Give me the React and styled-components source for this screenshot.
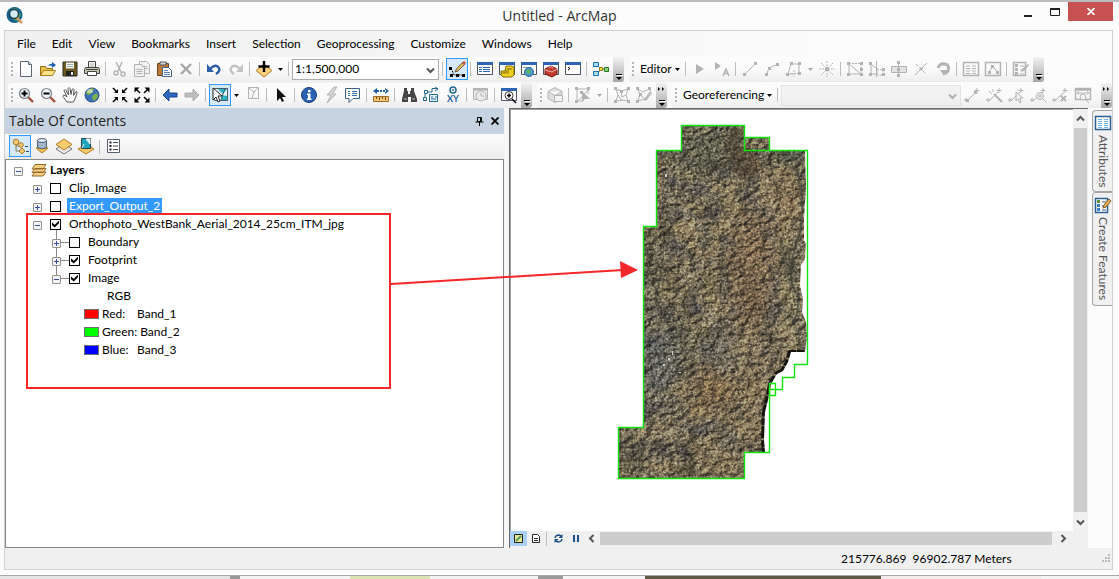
import React from "react";
import styled, { createGlobalStyle } from "styled-components";

const GlobalStyle = createGlobalStyle`
  * {
    box-sizing: border-box;
  }
  body {
    margin: 0;
    background: #fcfcfc;
    font-family: Lato, "Noto Sans", sans-serif;
    font-size: 12px;
    line-height: 18px;
    color: #000;
  }
  button, select {
    font: inherit;
    color: inherit;
    background: none;
    border: 0;
    padding: 0;
    margin: 0;
  }
  svg {
    display: block;
    flex: none;
  }
`;

const Page = styled.div`
  min-height: 100vh;
  display: flex;
  flex-direction: column;
  position: relative;
  border-top: 2px solid #bcbcbe;
`;

/* title bar */
const TitleBar = styled.header`
  height: 28px;
  display: grid;
  grid-template-columns: 1fr auto 1fr;
  align-items: center;
  padding: 0 6px;
`;
const Title = styled.h1`
  margin: 0;
  font-family: "Open Sans", sans-serif;
  font-size: 14px;
  font-weight: 400;
  color: #333;
`;
const WindowButtons = styled.div`
  display: flex;
  justify-content: flex-end;
  align-self: start;
`;
const WindowButton = styled.button`
  width: ${(props) => (props.$close ? "45px" : "27px")};
  height: 19px;
  display: flex;
  align-items: center;
  justify-content: center;
  background: ${(props) => (props.$close ? "#c75050" : "none")};
`;

const Frame = styled.main`
  flex: 1;
  margin: 0 6px 5px 4px;
  border: 1px solid #d0d0d0;
  display: flex;
  flex-direction: column;
  background: linear-gradient(90deg, #f0f0f0, #f5f5f5 40%, #fcfcfc 80%);
`;

/* menu and tool bars */
const Menu = styled.nav`
  height: 25px;
  display: flex;
  align-items: center;
  gap: 16px;
  padding: 0 12px;
`;
const MenuItem = styled.button`
  line-height: 20px;
`;
const BarRow = styled.div`
  height: 26px;
  display: flex;
  align-items: center;
  gap: 5px;
  padding: 0 0 0 3px;
`;
const Bar = styled.div`
  display: flex;
  align-items: center;
  height: 25px;
  flex: ${(props) => (props.$grow ? "1" : "none")};
  border-radius: 3px;
  background: linear-gradient(#fcfcfc, #fafafa 50%, #ededed);
`;
const Grip = styled.span`
  width: 2px;
  height: 15px;
  margin: 0 2px 0 3px;
  background: repeating-linear-gradient(#b4b4b4 0 2px, transparent 2px 4px);
`;
const Separator = styled.span`
  width: 1px;
  height: 14px;
  margin: 0 3px 0 2px;
  background: #bdbdbd;
`;
const ToolButton = styled.button`
  width: 22px;
  height: 22px;
  display: flex;
  align-items: center;
  justify-content: center;
  border: 1px solid ${(props) => (props.$active ? "#3399ff" : "transparent")};
  background: ${(props) => (props.$active ? "#d6e9f9" : "none")};
`;
const DropButton = styled.button`
  width: 11px;
  height: 22px;
  display: flex;
  align-items: center;
  justify-content: center;
`;
const TextButton = styled.button`
  display: flex;
  align-items: center;
  gap: 3px;
  padding: 0 3px 0 4px;
`;
const OverflowButton = styled.button`
  width: 11px;
  height: 25px;
  margin-left: ${(props) => (props.$far ? "7px" : "1px")};
  display: flex;
  align-items: flex-end;
  justify-content: center;
  border-radius: 0 3px 3px 0;
  background: linear-gradient(#f2f2f2, #a6a6a6);
`;
const Combo = styled.div`
  position: relative;
  display: flex;
  flex: ${(props) => (props.$grow ? "1" : "none")};
  width: ${(props) => (props.$grow ? "auto" : "147px")};
  height: 21px;
  margin-right: 1px;
  svg {
    position: absolute;
    right: 4px;
    top: 7px;
    pointer-events: none;
  }
`;
const Select = styled.select`
  appearance: none;
  flex: 1;
  padding: 0 20px 0 2px;
  border-radius: 0;
  border: 1px solid ${(props) => (props.disabled ? "#d9d9d9" : "#ababab")};
  background: ${(props) => (props.disabled ? "#efefef" : "#fff")};
`;

/* work area */
const Work = styled.div`
  flex: 1;
  display: flex;
`;
const Contents = styled.section`
  flex: 0 1 499px;
  display: flex;
  flex-direction: column;
`;
const PanelHeader = styled.div`
  height: 26px;
  display: flex;
  align-items: center;
  gap: 2px;
  padding: 0 2px 0 4px;
  background: #c7d3e0;
`;
const PanelTitle = styled.h2`
  flex: 1;
  margin: 0;
  font-family: "Open Sans", sans-serif;
  font-size: 14px;
  font-weight: 400;
  color: #222;
`;
const PanelButton = styled.button`
  width: 14px;
  height: 16px;
  display: flex;
  align-items: center;
  justify-content: center;
`;
const PanelTools = styled.div`
  height: 25px;
  display: flex;
  align-items: flex-start;
  padding: 1px 4px;
  background: linear-gradient(#fcfcfc, #ececec);
  ${Separator} {
    align-self: center;
  }
`;
const Tree = styled.ul`
  flex: 1;
  margin: 0;
  padding: 1px 0;
  list-style: none;
  background: #fff;
  border: 1px solid #828790;
`;
const Row = styled.li`
  height: 18px;
  display: flex;
  align-items: center;
  padding-left: ${(props) => props.$indent};
`;
const Toggle = styled.button`
  width: 9px;
  height: 9px;
  display: flex;
  position: relative;
  top: 1px;
  border: 1px solid #919191;
  border-radius: 1px;
  background:
    linear-gradient(#3b4fa0, #3b4fa0) center / 5px 1px no-repeat,
    ${(props) =>
      props.$open ? "" : "linear-gradient(#3b4fa0, #3b4fa0) center / 1px 5px no-repeat,"}
    #f4f4f6;
  &::before {
    content: "";
    display: ${(props) => (props.$linked ? "block" : "none")};
    position: absolute;
    left: 3px;
    bottom: 8px;
    width: 1px;
    height: 9px;
    background: #8a8a8a;
  }
`;
const Branch = styled.span`
  width: 8px;
  height: 1px;
  background: ${(props) => (props.$linked ? "#8a8a8a" : "transparent")};
`;
const Check = styled.input`
  appearance: none;
  width: 11px;
  height: 11px;
  margin: 0;
  border: 1px solid #000;
  background: #fff;
  &:checked::after {
    content: "";
    display: block;
    width: 7px;
    height: 7px;
    margin: 1px;
    background: #000;
    clip-path: polygon(0 30%, 40% 62%, 100% 0, 100% 38%, 40% 100%, 0 68%);
  }
`;
const LayerName = styled.label`
  margin-left: 6px;
  padding: 0 2px;
  line-height: 16px;
  color: ${(props) => (props.$selected ? "#fff" : "#000")};
  background: ${(props) => (props.$selected ? "#3399ff" : "none")};
`;
const Root = styled.strong`
  margin-left: 3px;
`;
const Swatch = styled.span`
  width: 15px;
  height: 10px;
  margin-right: 3px;
  border: 1px solid #6e6e6e;
  background: ${(props) => props.$color};
`;
const Channel = styled.span`
  min-width: 32px;
  margin-right: 3px;
`;

const MapPane = styled.section`
  flex: 1;
  margin-left: 5px;
  display: grid;
  grid-template-columns: 1fr 15px;
  grid-template-rows: 1fr 17px;
  background: #f0f0f0;
  border-top: 1px solid #696969;
  border-left: 1px solid #696969;
`;
const Canvas = styled.div`
  position: relative;
  background: #fff;
  border-left: 1px solid #a0a0a0;
  border-top: 1px solid #a0a0a0;
`;
const Imagery = styled.svg`
  position: absolute;
  left: 101px;
  top: 11px;
`;
const ScrollColumn = styled.div`
  display: flex;
  flex-direction: column;
`;
const ScrollRow = styled.div`
  display: flex;
  align-items: center;
  padding-bottom: 2px;
`;
const ScrollButton = styled.button`
  width: ${(props) => (props.$wide ? "20px" : "15px")};
  height: ${(props) => (props.$tall ? "18px" : "14px")};
  display: flex;
  align-items: center;
  justify-content: center;
`;
const Thumb = styled.div`
  flex: 1;
  align-self: stretch;
  margin: 1px;
  background: #cdcdcd;
`;
const ViewButton = styled.button`
  width: 17px;
  height: 15px;
  display: flex;
  align-items: center;
  justify-content: center;
  background: ${(props) => (props.$active ? "#a9d1f5" : "none")};
`;

const Tabs = styled.div`
  margin-left: 4px;
  padding-top: 2px;
  width: 20px;
  display: flex;
  flex-direction: column;
`;
const Tab = styled.button`
  display: flex;
  align-items: center;
  gap: 4px;
  writing-mode: vertical-rl;
  width: 20px;
  padding: 4px 0;
  font-size: 12px;
  color: #555;
  background: #f1f1f1;
  border: 1px solid #a5a5a5;
  border-right: 0;
  border-radius: 4px 0 0 4px;
`;

const StatusBar = styled.footer`
  height: 21px;
  display: flex;
  align-items: center;
  justify-content: flex-end;
  background: #f0f0f0;
`;
const Coordinates = styled.span`
  width: 261px;
  white-space: pre;
`;

const Desktop = styled.div`
  height: 4px;
  display: flex;
  border-top: 1px solid #a9a9a9;
`;
const Sliver = styled.span`
  flex: ${(props) => props.$size};
  background: ${(props) => props.$color};
`;

/* marks drawn over the window */
const Callout = styled.div`
  position: absolute;
  left: 26px;
  top: 211px;
  width: 365px;
  height: 176px;
  border: 2px solid #f5272b;
  pointer-events: none;
`;
const Arrow = styled.svg`
  position: absolute;
  left: 391px;
  top: 256px;
  pointer-events: none;
`;

const G = "#b3b3b3";
const window16 = (
  <g>
    <path d="M0.500 1.500h15v12h-15z" fill="#fff" stroke="#4b5563" />
    <path d="M0 1h16v3H0z" fill="#2f63b5" />
  </g>
);
const dot = (x, y, c = G) => <rect key={`${x}-${y}`} x={x} y={y} width="3" height="3" fill={c} />;
const lens = (
  <g>
    <path d="M10 10l5 5" stroke="#a3503a" strokeWidth="2.4" />
    <circle cx="6.5" cy="6.5" r="5" fill="#eef3f7" stroke="#7d8288" strokeWidth="1.2" />
  </g>
);
const control = (
  <g stroke={G} fill="none">
    <path d="M2 14l9-9M1 11v4M-1 13h4M12 1v5M9.500 3.500h5" />
  </g>
);

const glyphs = {
  new: (
    <g fill="#fff" stroke="#5c6672">
      <path d="M2.500 0.500h8l3 3v12h-11z" />
      <path d="M10.500 0.500v3h3" fill="#cfdbe8" />
    </g>
  ),
  open: (
    <g>
      <path d="M0.500 14.500v-9h5l1 2h6v7z" fill="#e9c14c" stroke="#8f6b14" />
      <path d="M0.500 14.500l3-5h12l-3 5z" fill="#fbe48b" stroke="#a67d1b" />
      <path d="M8 5q2-3 4-2v-2l4 3-4 3v-2q-2-1-4 0z" fill="#1d5fb0" />
    </g>
  ),
  save: (
    <g>
      <path d="M1 1h14v14H1z" fill="#6d5a1e" stroke="#2c2a20" />
      <path d="M4 1.500h8v6H4z" fill="#f4f4f4" />
      <path d="M5 3.500h6M5 5.500h6" stroke="#9aa" />
      <path d="M4 10h8v5H4z" fill="#222" />
      <path d="M9 11h2v3H9z" fill="#eee" />
    </g>
  ),
  print: (
    <g stroke="#444">
      <path d="M4.500 7V0.500h7V7" fill="#fff" />
      <path d="M5.500 3h5M5.500 5h5" stroke="#aaa" />
      <path d="M1.500 6.500h13l1 2v4h-15v-4z" fill="#c9c6b2" />
      <path d="M3.500 10.500h9v4h-9z" fill="#fff" />
      <path d="M2 8.500h12" />
    </g>
  ),
  cut: (
    <g stroke={G} fill="none" strokeWidth="1.5">
      <path d="M4 1l5 10M10 1L6 10" />
      <circle cx="4" cy="12" r="2" />
      <circle cx="11" cy="13" r="2" />
    </g>
  ),
  copy: (
    <g fill="#f1f1f1" stroke={G}>
      <path d="M5.500 0.500h7l3 3v9h-10z" />
      <path d="M0.500 3.500h7l3 3v9h-10z" />
      <path d="M2.500 8.500h6M2.500 10.500h6M2.500 12.500h6M8 5.500h5M11 7.500h3" />
    </g>
  ),
  paste: (
    <g>
      <path d="M1.500 2.500h11v12h-11z" fill="#bd7a36" stroke="#6b431d" />
      <path d="M4 1h6v3H4z" fill="#d8d8d8" stroke="#555" />
      <path d="M6.500 6.500h6l3 3v6h-9z" fill="#fff" stroke="#47658c" />
      <path d="M8 9.500h4M8 11.500h6M8 13.500h6" stroke="#5a86c4" />
    </g>
  ),
  delete: <path d="M3 3l10 10M13 3L3 13" stroke="#a5a5a5" strokeWidth="2.4" />,
  undo: (
    <g>
      <path d="M4 8q6-6 9-1q1.500 3-3 6" fill="none" stroke="#2a5ca8" strokeWidth="2.4" />
      <path d="M1 3v8h7z" fill="#2a5ca8" />
    </g>
  ),
  redo: (
    <g>
      <path d="M12 8q-6-6-9-1q-1.500 3 3 6" fill="none" stroke="#c2c2c2" strokeWidth="2.400" />
      <path d="M15 3v8H8z" fill="#c2c2c2" />
    </g>
  ),
  addData: (
    <g>
      <path d="M8 3l8 6.500L8 16 0 9.500z" fill="#fbd27e" stroke="#b77d2c" />
      <path d="M8 0v11M2.500 5.500h11" stroke="#000" strokeWidth="2.400" />
    </g>
  ),
  editSketch: (
    <g>
      <path d="M2 7l3 7h9" fill="none" stroke="#000" strokeDasharray="2 1" />
      {dot(0, 6, "#000")}
      {dot(1, 13, "#000")}
      {dot(7, 13, "#000")}
      {dot(13, 13, "#000")}
      <path d="M6 11l1.500-3L14 1l2 2-7 7z" fill="#e9bf68" stroke="#6b5330" />
      <path d="M13 2l2-2 2 2-2 2z" fill="#c0504d" />
    </g>
  ),
  toc: (
    <g>
      {window16}
      <path d="M2 6.500h3M2 8.500h3M2 10.500h3" stroke="#2f63b5" />
      <path d="M6 6.500h7M6 8.500h7M6 10.500h7" stroke="#2f63b5" />
    </g>
  ),
  catalog: (
    <g>
      {window16}
      <path d="M2 10h4l1-5h6l2 1v8l-2 2H4l-2-2z" fill="#f0cf1d" stroke="#7d6a0c" />
      <path d="M7 9v3H3M9 7v6M9 8h4" stroke="#7d6a0c" fill="none" />
    </g>
  ),
  search: (
    <g>
      {window16}
      <path d="M2 6.500h8" stroke="#8aa" />
      <circle cx="8" cy="11" r="4.500" fill="#4c98c9" stroke="#2b6a97" />
      <path d="M5 10q2-3 4-1t-1 4q-2 0-3-3z" fill="#63b35c" />
    </g>
  ),
  toolbox: (
    <g>
      {window16}
      <path d="M2 8l6-3 6 3v5l-5 3-7-3z" fill="#c43c30" stroke="#79170f" />
      <path d="M2 9l7 2 5-3M6 7q2-3 4 0" fill="none" stroke="#f3b4ad" />
    </g>
  ),
  python: (
    <g>
      {window16}
      <path d="M3 6l2 1.500L3 9" fill="none" stroke="#000" />
    </g>
  ),
  model: (
    <g fill="none">
      <path d="M4 4l4 4-4 5M8 8h4" stroke="#333" />
      <path d="M0.500 1.500h5v4h-5zM0.500 10.500h5v4h-5z" fill="#a8dcf5" stroke="#1672ae" />
      <path d="M6.500 6.500h3v3h-3z" fill="#f8dc45" stroke="#927a10" />
      <path d="M11.500 6.500h4v4h-4z" fill="#87d378" stroke="#2c7a25" />
    </g>
  ),
  editTool: <path d="M4 3v10l8-5z" fill={G} />,
  editText: (
    <g>
      <path d="M1 1v8l6-4z" fill={G} />
      <path d="M9 15l3-7 3 7M10 12.500h4" fill="none" stroke={G} strokeWidth="1.500" />
    </g>
  ),
  line: (
    <g>
      <path d="M3 13L13 3" stroke={G} />
      {dot(1, 12)}
      {dot(12, 1)}
    </g>
  ),
  arc: (
    <g>
      <path d="M3 13Q4 5 13 4" fill="none" stroke={G} />
      {[dot(1, 12), dot(4, 6), dot(12, 2)]}
    </g>
  ),
  trace: (
    <g>
      <path d="M5 3h8v9M5 3L2 13h5" fill="none" stroke={G} />
      <path d="M8 9v7M5 12.500h7" stroke={G} strokeDasharray="2 1" />
      {[dot(4, 1), dot(12, 1), dot(0, 12), dot(12, 11)]}
    </g>
  ),
  burst: (
    <g stroke={G} strokeDasharray="2 1">
      <path d="M8 0v16M0 8h16M2 2l12 12M14 2L2 14" />
      <path d="M6 8h4" strokeWidth="4" strokeDasharray="none" />
    </g>
  ),
  reshape: (
    <g>
      <path d="M2 14V3l12 10H2" fill="none" stroke={G} />
      <path d="M2 2.500h12v11" fill="none" stroke={G} strokeDasharray="2 1" />
      {[dot(0, 1), dot(13, 1), dot(0, 12), dot(13, 12), dot(13, 7)]}
    </g>
  ),
  cutPoly: (
    <g>
      <path d="M2 14V3l6 5v5H2M7.500 0v16" fill="none" stroke={G} />
      <path d="M8 8l6 1v5H8" fill="none" stroke={G} strokeDasharray="2 1" />
      {[dot(0, 1), dot(0, 12), dot(13, 7), dot(13, 12)]}
    </g>
  ),
  split: (
    <g>
      <path d="M0.500 5.500h15v6h-15z" fill="#e2e2e2" stroke={G} />
      <path d="M7.500 0v16" stroke={G} />
      {[dot(6, 0), dot(6, 7), dot(6, 13)]}
    </g>
  ),
  splitLine: (
    <g stroke={G}>
      <path d="M2 14L14 2" />
      <path d="M3 3l10 10" strokeDasharray="3 2" />
      <path d="M6.500 8h3" strokeWidth="3" />
    </g>
  ),
  rotate: (
    <g>
      <path d="M3 7q2-5 7-4t3 7l-3 3" fill="none" stroke={G} strokeWidth="3" />
      <path d="M5 9h7l-3 6z" fill={G} />
    </g>
  ),
  attributes: (
    <g stroke={G} fill="none">
      <path d="M0.500 1.500h15v13h-15z" strokeWidth="1.500" />
      <path d="M3 5h4M3 7.500h4M3 10h4M3 12.500h4M9 5h4M9 7.500h4M9 10h4M9 12.500h4" />
    </g>
  ),
  sketchProps: (
    <g>
      <path d="M0.500 1.500h15v13h-15z" fill="none" stroke={G} strokeWidth="1.500" />
      <path d="M4 11l4-6 4 6" fill="none" stroke={G} />
      {[dot(3, 10), dot(6, 4), dot(11, 10)]}
    </g>
  ),
  createFeat: (
    <g>
      <path d="M0.500 1.500h12v13h-12z" fill="none" stroke={G} strokeWidth="1.500" />
      {[dot(2, 3), dot(2, 7), dot(2, 11)]}
      <path d="M7 5h4M7 9h3M7 13h4" stroke={G} />
      <path d="M8 11l1-3 6-5 1 1-5 6z" fill={G} />
    </g>
  ),
  zoomIn: (
    <g>
      {lens}
      <path d="M6.500 3.500v6M3.500 6.500h6" stroke="#000" strokeWidth="2" />
    </g>
  ),
  zoomOut: (
    <g>
      {lens}
      <path d="M3.500 6.500h6" stroke="#000" strokeWidth="2" />
    </g>
  ),
  pan: (
    <path
      d="M5 15L1 9.500q0-2 2-1L5 10 2 3.500q1-2 2 0L6.500 8 6 1.500q1-2 2 0L9 7.500l1-5q1.500-1.500 2 0L11.500 8.500 13.500 5q2-1 1.500 1l-2.500 7-1 2z"
      fill="#fff"
      stroke="#555"
    />
  ),
  globe: (
    <g>
      <circle cx="8" cy="8" r="7" fill="#3c72b8" stroke="#234c86" />
      <path d="M3 4q4-4 7-2l-2 4-3 2-3-1zM9 8l4-2 1 4-4 4-2-3z" fill="#7fb04e" />
      <ellipse cx="6" cy="4" rx="3" ry="2" fill="#fff" opacity="0.500" />
    </g>
  ),
  fixedIn: (
    <g fill="#000" stroke="#000" strokeWidth="1.500">
      <path d="M1 1l4 4M15 1l-4 4M1 15l4-4M15 15l-4-4" />
      <path d="M6 2v4H2zM10 2v4h4zM6 14v-4H2zM10 14v-4h4z" stroke="none" />
    </g>
  ),
  fixedOut: (
    <g fill="#000" stroke="#000" strokeWidth="1.500">
      <path d="M2 2l4 4M14 2l-4 4M2 14l4-4M14 14l-4-4" />
      <path d="M0.500 0.500h5l-5 5zM15.500 0.500h-5l5 5zM0.500 15.500h5l-5-5zM15.500 15.500h-5l5-5z" stroke="none" />
    </g>
  ),
  back: <path d="M1 8l6-6v4h8v4H7v4z" fill="#2f68c4" stroke="#1b458f" />,
  forward: <path d="M15 8L9 2v4H1v4h8v4z" fill="#bdbdbd" stroke="#adadad" />,
  selectFeat: (
    <g>
      <path d="M2.500 1.500h13v12h-13z" fill="#e9f3f7" stroke="#4b5b66" />
      <path d="M6 2l5 5 4-5zM10 8l5 1v4H9z" fill="#2bb4c7" />
      <path d="M11 7l2-5M11 7l-2 6" stroke="#4b5b66" />
      <path d="M1 1v12l3-3 2 5 2-1-2-5h4z" fill="#fff" stroke="#222" />
    </g>
  ),
  clearSel: (
    <g fill="none" stroke={G}>
      <path d="M3.500 0.500h10v11h-10zM4 1l5 4 4-4M9 5l-2 6" />
    </g>
  ),
  arrow: <path d="M4 1v13l3-3 2 4 2-1-2-4h4z" fill="#111" />,
  identify: (
    <g>
      <circle cx="8" cy="8" r="7.500" fill="#2a62b4" stroke="#183f7d" />
      <path d="M7 3h2.500v2.200H7zM6 6.500h3.500v5h1V13H6v-1.500h1V8H6z" fill="#fff" />
    </g>
  ),
  hyperlink: <path d="M11 0L4 8h4l-4 8 9-9H9l5-7z" fill="#d6d6d6" stroke={G} />,
  htmlPopup: (
    <g>
      <path d="M0.500 1.500h14v10H8l-4 4v-4H0.500z" fill="#fff" stroke="#3c6184" />
      <path d="M3 4.500h2M3 6.500h2M3 8.500h2M7 4.500h5M7 6.500h5M7 8.500h5" stroke="#356fa8" />
    </g>
  ),
  measure: (
    <g>
      <path d="M0.500 9.500h15v5h-15z" fill="#f7c777" stroke="#9a6a1f" />
      <path d="M3.500 10v2M6.500 10v3M9.500 10v2M12.500 10v3" stroke="#6d4a14" />
      <path d="M0 4l4-3v6zM16 4l-4-3v6zM3 3h3v2H3zM10 3h3v2h-3zM7 3h2v2H7z" fill="#215fa3" />
    </g>
  ),
  find: (
    <g fill="#454545">
      <path d="M3 1h3v3h1v3h2V4h1V1h3v3l3 8v3h-6v-5H7v5H1v-3L3 4z" />
      <path d="M3 12h3M11 12h3" stroke="#bbb" />
    </g>
  ),
  route: (
    <g fill="none" stroke="#22668e">
      <path d="M1.500 3.500h3v3h-3zM0.500 10.500h3v3h-3zM5 5h4V1.500M9 1.500h5M12 0l3 2-3 2M2 7v3" />
      <path d="M6.500 7.500h8v7h-8z" fill="#e7f2f7" />
      <path d="M8 10h2M8 12h5M12 10h2" />
    </g>
  ),
  clock: (
    <g stroke={G} fill="#eaeaea">
      <path d="M0.500 1.500h14v11h-14z" />
      <path d="M0 2.500h15" strokeWidth="2" />
      <circle cx="8" cy="9" r="5" />
      <path d="M8 6v3h3" fill="none" />
    </g>
  ),
  viewer: (
    <g>
      {window16}
      <circle cx="8" cy="8.500" r="4" fill="#fff" stroke="#333" />
      <path d="M8 6.500v4M6 8.500h4M11 12l4 4" stroke="#000" strokeWidth="1.500" />
    </g>
  ),
  cube: (
    <g fill="#e0e0e0" stroke={G}>
      <path d="M8 0.500l7 4v7l-7 4-7-4v-7zM1 4.500l7 4 7-4M8 8.500v7" />
      <path d="M7.500 8.500h8v6h-8z" fill="#f3f3f3" />
    </g>
  ),
  topoEdit: (
    <g>
      <path d="M2 2h11v5M2 2v12h5M4 13L13 3" fill="none" stroke={G} />
      {[dot(0, 0), dot(12, 0), dot(0, 13), dot(5, 4)]}
      <path d="M7 4v11l3-3 5 0z" fill={G} />
    </g>
  ),
  topoShare: (
    <g>
      <path d="M2 2l5 2 7-2-2 6 2 6-6-1-6 1 2-6zM4 8l4 6M7 4l1 6 4-2" fill="none" stroke={G} />
      {[dot(0, 0), dot(13, 0), dot(0, 13), dot(13, 13), dot(6, 3)]}
    </g>
  ),
  topoReshape: (
    <g>
      <path d="M2 2l5 3 6-3M2 2l2 6-2 6 7-2 6-9M4 8l5 4" fill="none" stroke={G} />
      {[dot(0, 0), dot(12, 0), dot(0, 13), dot(3, 6)]}
      <path d="M8 13l7-8 1 1-6 8z" fill={G} />
    </g>
  ),
  ctrlAdd: (
    <g>
      {control}
      {[dot(1, 12), dot(9, 4)]}
    </g>
  ),
  ctrlAuto: (
    <g>
      {control}
      <path d="M7 7l8 8" stroke={G} strokeWidth="2" />
      <path d="M2 4l3 3M6 2v3" stroke={G} />
    </g>
  ),
  ctrlSelect: (
    <g>
      {control}
      <path d="M7 5v9l2-2 2 4 1-1-1-4h3z" fill="#eee" stroke={G} />
    </g>
  ),
  ctrlZoom: (
    <g>
      {control}
      <circle cx="9" cy="9" r="3.500" fill="#f2f2f2" stroke={G} />
      <path d="M11.500 11.500l4 4M7 9h4M9 7v4" stroke={G} />
    </g>
  ),
  ctrlDelete: (
    <g>
      {control}
      <path d="M8 9l5 5M13 9l-5 5" stroke={G} strokeWidth="2" />
    </g>
  ),
  linkTable: (
    <g stroke={G} fill="none">
      <path d="M0.500 1.500h15v11h-15zM0 3h16" strokeWidth="1.500" />
      <path d="M2 6h12M4 4.500L2 6l2 1.500M12 4.500L14 6l-2 1.500" />
      <circle cx="8" cy="10" r="3" fill="#f2f2f2" />
      <path d="M10 12l4 4" />
    </g>
  ),
  listDrawing: (
    <g>
      <path d="M4 5v8h6M4 8h5" fill="none" stroke="#8a7a55" />
      <circle cx="4" cy="4" r="2.800" fill="#f6c979" stroke="#b07a25" />
      <circle cx="9" cy="7" r="2.300" fill="#f6c979" stroke="#b07a25" />
      <path d="M10 10l3 3-3 3-3-3z" fill="#f6c979" stroke="#b07a25" />
      <path d="M13 8.500h3M14 13.500h3" stroke="#2a4c74" />
    </g>
  ),
  listSource: (
    <g>
      <path d="M8 15L2 10h12z" fill="#f6c14f" stroke="#a97b1f" />
      <path d="M3.500 2.500v7q4.500 3 9 0v-7z" fill="#a4b4c9" stroke="#4d5e78" />
      <ellipse cx="8" cy="2.500" rx="4.500" ry="2" fill="#dfe7f1" stroke="#4d5e78" />
    </g>
  ),
  listVisible: (
    <g>
      <path d="M8 6l8 5-8 5-8-5z" fill="#ececec" stroke="#777" />
      <path d="M8 1l8 5.500L8 12 0 6.500z" fill="#f8ca6c" stroke="#ad7c25" />
    </g>
  ),
  listSelection: (
    <g>
      <path d="M8 6l8 5-8 5-8-5z" fill="#f8ca6c" stroke="#ad7c25" />
      <path d="M3.500 0.500h9v10h-9z" fill="#1fa5bd" stroke="#28414c" />
      <path d="M8 1l4 0v5zM4 10l2-4" fill="#e7f4f7" stroke="#e7f4f7" />
    </g>
  ),
  options: (
    <g>
      <path d="M1.500 1.500h12v13h-12z" fill="#fff" stroke="#56616c" />
      <path d="M3.500 4.500h2M3.500 8h2M3.500 11.500h2" stroke="#222" strokeWidth="2" />
      <path d="M7 4.500h5M7 8h5M7 11.500h5" stroke="#444" />
    </g>
  ),
  layers: (
    <g fill="#f8cf83" stroke="#94692a">
      <path d="M1 14l3-4h11l-3 4zM1 10.500l3-4h11l-3 4zM1 7l3-4.500h11L12 7z" />
    </g>
  ),
  table: (
    <g>
      <path d="M0.500 1.500h15v13h-15z" fill="#fff" stroke="#2e6094" strokeWidth="1.500" />
      <path d="M3 4.500h4M3 6.500h4M3 8.500h4M3 10.500h4M3 12.500h4M9 4.500h4M9 6.500h4M9 8.500h4M9 10.500h4M9 12.500h4" stroke="#76b4e6" />
    </g>
  ),
  template: (
    <g>
      <path d="M0.500 1.500h12v14h-12z" fill="#fff" stroke="#2e6094" strokeWidth="1.500" />
      {dot(2, 3, "#5b8f3a")}
      {dot(2, 7, "#377fc5")}
      {dot(2, 11, "#377fc5")}
      <path d="M7 5h4M7 9h2M7 13h4" stroke="#3d5a78" />
      <path d="M8 11l1-3 5-6 2 2-5 6z" fill="#f0b458" stroke="#7b5727" />
    </g>
  ),
};

function Icon({ name, size = 16 }) {
  return (
    <svg width={size} height={size} viewBox="0 0 16 16" overflow="visible" aria-hidden="true">
      {glyphs[name]}
    </svg>
  );
}

// the go-to-XY icon carries real letters
function GoToXY() {
  return (
    <svg width="20" height="20" viewBox="0 0 20 20" aria-hidden="true">
      <circle cx="10" cy="5" r="3" fill="none" stroke="#22668e" strokeWidth="1.500" />
      <circle cx="10" cy="5" r="1" fill="#22668e" />
      <text x="10" y="17" textAnchor="middle" fontSize="9" fontWeight="700" fill="#1d5f9a">
        XY
      </text>
    </svg>
  );
}

function Chevron({ dir = "down", color = "#555" }) {
  const turn = { down: 0, left: 90, up: 180, right: 270 }[dir];
  return (
    <svg width="9" height="9" viewBox="0 0 9 9" aria-hidden="true">
      <path
        d="M1 2.500l3.500 3.500L8 2.500"
        fill="none"
        stroke={color}
        strokeWidth="2"
        transform={`rotate(${turn} 4.500 4.500)`}
      />
    </svg>
  );
}

function Caret({ color = "#000" }) {
  return (
    <svg width="5" height="3" viewBox="0 0 5 3" aria-hidden="true">
      <path d="M0 0h5L2.500 3z" fill={color} />
    </svg>
  );
}

function Overflow({ more, far }) {
  return (
    <OverflowButton $far={far} aria-label="More buttons">
      <svg width="11" height="25" viewBox="0 0 11 25" aria-hidden="true">
        {more && <path d="M2 4v4l2-2zM6 4v4l2-2z" fill="#000" />}
        <path d="M4 18h6v1H4z" fill="#fff" />
        <path d="M3 17h6v1H3zM3 20h6l-3 3z" fill="#000" />
      </svg>
    </OverflowButton>
  );
}

// "|" is a separator, "v" a black drop arrow, "-" a grey one, "!" marks the pressed button
function Tools({ items }) {
  return items.map((item, i) => {
    if (item === "|") return <Separator key={i} />;
    if (item === "v" || item === "-") {
      return (
        <DropButton key={i} aria-label="Open list">
          <Caret color={item === "v" ? "#000" : "#aaa"} />
        </DropButton>
      );
    }
    const active = item.startsWith("!");
    const name = active ? item.slice(1) : item;
    return (
      <ToolButton key={i} $active={active} aria-label={name}>
        {name === "goToXY" ? <GoToXY /> : <Icon name={name} />}
      </ToolButton>
    );
  });
}

const menus = [
  "File",
  "Edit",
  "View",
  "Bookmarks",
  "Insert",
  "Selection",
  "Geoprocessing",
  "Customize",
  "Windows",
  "Help",
];

const layers = [
  { name: "Clip_Image", indent: "27px" },
  { name: "Export_Output_2", indent: "27px", selected: true },
  { name: "Orthophoto_WestBank_Aerial_2014_25cm_ITM_jpg", indent: "27px", checked: true, open: true },
  { name: "Boundary", indent: "46px", child: true },
  { name: "Footprint", indent: "46px", child: true, checked: true },
  { name: "Image", indent: "46px", child: true, checked: true, open: true },
];

const bands = [
  ["Red:", "Band_1", "#ff0000"],
  ["Green:", "Band_2", "#00ff00"],
  ["Blue:", "Band_3", "#0000ff"],
];

const slivers = [
  [230, "#e4e4e4"],
  [10, "#999"],
  [110, "#f4f4f4"],
  [80, "#dbe3b5"],
  [108, "#f2f2f2"],
  [25, "#9a9a9a"],
  [82, "#f4f4f4"],
  [236, "#5e5a45"],
  [160, "#f3ecec"],
  [78, "#f4f4f4"],
];

function MapImagery() {
  return (
    <Imagery width="200" height="362" viewBox="612 121 200 362" role="img" aria-label="Aerial orthophoto">
      <defs>
        <clipPath id="area">
          <path d="M681 125h63v12h25v13h36l1 38-2 30v22l2 4-1 15-4 6-1 20 3 15-1 12 4 10 1 14-2 16h-14l-3 10-5 9-6 3-6 10-3 16-3 12-1 28 1 12h-21v26H618v-51h25V226h13v-76h25z" />
        </clipPath>
        <filter id="relief" x="0" y="0" width="100%" height="100%" colorInterpolationFilters="sRGB">
          <feTurbulence type="fractalNoise" baseFrequency="0.14 0.2" numOctaves="4" seed="8" />
          <feColorMatrix values="0 0 0 0 0  0 0 0 0 0  0 0 0 0 0  1 0.6 0 0 -0.200" />
          <feDiffuseLighting surfaceScale="4" diffuseConstant="0.780" lightingColor="#fff">
            <feDistantLight azimuth="215" elevation="48" />
          </feDiffuseLighting>
        </filter>
        <filter id="grain" x="0" y="0" width="100%" height="100%" colorInterpolationFilters="sRGB">
          <feTurbulence type="fractalNoise" baseFrequency="0.45" numOctaves="3" seed="4" />
          <feColorMatrix values="1.2 0 0 0 -0.100  1.2 0 0 0 -0.100  1.2 0 0 0 -0.100  0 0 0 0 1" />
        </filter>
        <filter id="mottle" x="0" y="0" width="100%" height="100%" colorInterpolationFilters="sRGB">
          <feTurbulence type="fractalNoise" baseFrequency="0.05" numOctaves="5" seed="21" />
          <feColorMatrix values="0.9 0 0 0 -0.010  0.75 0.05 0 0 0.010  0.4 0.200 0 0 0.040  0 0 0 0 1" />
        </filter>
        <filter id="soft" x="-50%" y="-50%" width="200%" height="200%">
          <feGaussianBlur stdDeviation="9" />
        </filter>
        <filter id="softer" x="-50%" y="-50%" width="200%" height="200%">
          <feGaussianBlur stdDeviation="2" />
        </filter>
      </defs>
      <g clipPath="url(#area)">
        <rect x="612" y="121" width="200" height="362" fill="#766b56" />
        <rect x="612" y="121" width="200" height="362" filter="url(#mottle)" opacity="0.500" />
        <g filter="url(#soft)" opacity="0.600">
          <ellipse cx="705" cy="150" rx="45" ry="26" fill="#585c4e" />
          <ellipse cx="790" cy="160" rx="16" ry="16" fill="#34463e" />
          <ellipse cx="650" cy="250" rx="10" ry="70" fill="#585645" />
          <ellipse cx="785" cy="200" rx="14" ry="34" fill="#927a58" />
          <ellipse cx="752" cy="270" rx="22" ry="60" fill="#7c6448" />
          <ellipse cx="670" cy="345" rx="26" ry="24" fill="#484e42" />
          <ellipse cx="655" cy="365" rx="18" ry="40" fill="#5a5e62" />
          <ellipse cx="720" cy="370" rx="16" ry="36" fill="#6c6c64" />
          <ellipse cx="712" cy="390" rx="20" ry="22" fill="#7b623f" />
          <ellipse cx="750" cy="390" rx="18" ry="60" fill="#857459" />
          <ellipse cx="635" cy="460" rx="16" ry="16" fill="#505040" />
          <ellipse cx="720" cy="465" rx="30" ry="14" fill="#857556" />
          <ellipse cx="798" cy="300" rx="14" ry="50" fill="#807962" />
        </g>
        <rect
          x="612"
          y="121"
          width="200"
          height="362"
          filter="url(#relief)"
          style={{ mixBlendMode: "overlay" }}
          opacity="0.500"
        />
        <g filter="url(#softer)" opacity="0.550">
          <path d="M730 170l12 14 18 18 14 14 22 18" fill="none" stroke="#a99878" strokeWidth="2" />
          <path d="M725 140l10-14 8 8-6 10 20 6 2 20-14 12-12-10z" fill="#46392a" />
          <path d="M705 165l22-4 4 5-14 4zM670 466l26-2-6 12-16-2z" fill="#3f3a2c" />
          <path d="M780 238l10 14 6 26-8 6-6-22z" fill="#4c4b3e" />
        </g>
        <rect
          x="612"
          y="121"
          width="200"
          height="362"
          filter="url(#grain)"
          style={{ mixBlendMode: "overlay" }}
          opacity="0.600"
        />
        <path
          d="M801 185q3 30-1 48-7 16-8 32-4 20 6 30 2 18-6 28M797 165l4 30"
          fill="none"
          stroke="#3a3c33"
          strokeWidth="2"
          opacity="0.600"
        />
        <path
          d="M665 174h2v3h-2zM672 351h1v4h-1zM668 358h2v2h-2zM679 372h2v1h-2zM663 364h2v2h-2z"
          fill="#d0d2d4"
        />
        <path
          d="M804 352h-14l-3 10-5 9-6 3-6 10-3 16-3 12-1 28 1 12"
          fill="none"
          stroke="#15130f"
          strokeWidth="4"
          strokeDasharray="7 1 12 2"
        />
      </g>
      <g fill="none" stroke="#12e412" strokeWidth="1.400">
        <path d="M681.500 125.500h63v12h25v13h38v214h-13v13h-12v12h-13v63h-25v26h-126v-51h25v-201h13v-76h25z" />
        <path d="M744.500 137.500v13h25M769.500 383.500h6v12h-6z" />
      </g>
    </Imagery>
  );
}

function ContentsPanel() {
  return (
    <Contents>
      <PanelHeader>
        <PanelTitle>Table Of Contents</PanelTitle>
        <PanelButton aria-label="Pin">
          <svg width="9" height="9" viewBox="0 0 9 9">
            <path d="M2.500 0.500h4v4h-4zM0.500 5h8M4.500 5v4M5.500 1v3" fill="none" stroke="#000" />
          </svg>
        </PanelButton>
        <PanelButton aria-label="Close panel">
          <svg width="8" height="8" viewBox="0 0 8 8">
            <path d="M0.500 0.500l7 7M7.500 0.500l-7 7" stroke="#000" strokeWidth="1.800" />
          </svg>
        </PanelButton>
      </PanelHeader>
      <PanelTools>
        <Tools items={["!listDrawing", "listSource", "listVisible", "listSelection", "|", "options"]} />
      </PanelTools>
      <Tree>
        <Row $indent="8px">
          <Toggle $open aria-label="Collapse Layers" />
          <Branch />
          <Icon name="layers" />
          <Root>Layers</Root>
        </Row>
        {layers.map((layer) => (
          <Row key={layer.name} $indent={layer.indent}>
            <Toggle
              $open={layer.open}
              $linked={layer.child}
              aria-label={`${layer.open ? "Collapse" : "Expand"} ${layer.name}`}
            />
            <Branch $linked={layer.child} />
            <Check type="checkbox" id={layer.name} defaultChecked={layer.checked} />
            <LayerName htmlFor={layer.name} $selected={layer.selected}>
              {layer.name}
            </LayerName>
          </Row>
        ))}
        <Row $indent="101px">RGB</Row>
        {bands.map(([channel, band, color]) => (
          <Row key={band} $indent="78px">
            <Swatch $color={color} />
            <Channel>{channel}</Channel>
            {band}
          </Row>
        ))}
      </Tree>
    </Contents>
  );
}

function MapView() {
  return (
    <MapPane>
      <Canvas>
        <MapImagery />
      </Canvas>
      <ScrollColumn>
        <ScrollButton $tall aria-label="Scroll up">
          <Chevron dir="up" />
        </ScrollButton>
        <Thumb />
        <ScrollButton $tall aria-label="Scroll down">
          <Chevron />
        </ScrollButton>
      </ScrollColumn>
      <ScrollRow>
        <ViewButton $active aria-label="Data view">
          <svg width="9" height="9" viewBox="0 0 9 9">
            <path d="M0.500 0.500h8v8h-8z" fill="#e6e79a" stroke="#222" />
            <path d="M2 7l5-5" stroke="#5c9a57" strokeWidth="2" />
          </svg>
        </ViewButton>
        <ViewButton aria-label="Layout view">
          <svg width="8" height="9" viewBox="0 0 8 9">
            <path d="M0.500 0.500h5l2 2v6h-7zM2 4.500h4M2 6.500h4" fill="#fff" stroke="#222" />
          </svg>
        </ViewButton>
        <Separator />
        <ViewButton aria-label="Refresh">
          <svg width="9" height="9" viewBox="0 0 9 9">
            <path d="M1 4q0.500-3 4-3l2 1M8 5q-0.500 3-4 3l-2-1" fill="none" stroke="#1d4f86" strokeWidth="1.400" />
            <path d="M8.500 0v4h-4zM0.500 9V5h4z" fill="#1d4f86" />
          </svg>
        </ViewButton>
        <ViewButton aria-label="Pause drawing">
          <svg width="7" height="7" viewBox="0 0 7 7">
            <path d="M1 0h2v7H1zM5 0h2v7H5z" fill="#1d4f86" />
          </svg>
        </ViewButton>
        <ScrollButton aria-label="Scroll left">
          <Chevron dir="left" />
        </ScrollButton>
        <Thumb />
        <ScrollButton $wide aria-label="Scroll right">
          <Chevron dir="right" />
        </ScrollButton>
      </ScrollRow>
    </MapPane>
  );
}

function App() {
  return (
    <>
      <GlobalStyle />
      <Page>
        <TitleBar>
          <svg width="18" height="18" viewBox="0 0 18 18" aria-hidden="true">
            <circle cx="8.500" cy="8" r="8" fill="#17618b" />
            <path d="M3 4q4-4 8-2l4 6-4 6-5-2z" fill="#4fa568" />
            <circle cx="8" cy="7" r="4.500" fill="#d5ebf5" stroke="#1c3e57" strokeWidth="1.500" />
            <path d="M11 11l5 5" stroke="#d29b5e" strokeWidth="2.500" />
          </svg>
          <Title>Untitled - ArcMap</Title>
          <WindowButtons>
            <WindowButton aria-label="Minimize">
              <svg width="8" height="11" viewBox="0 0 8 11">
                <path d="M0 9h8v2H0z" fill="#222" />
              </svg>
            </WindowButton>
            <WindowButton aria-label="Maximize">
              <svg width="10" height="8" viewBox="0 0 10 8">
                <path d="M0.500 1h9v6.500h-9z" fill="none" stroke="#222" />
                <path d="M0 0h10v2H0z" fill="#222" />
              </svg>
            </WindowButton>
            <WindowButton $close aria-label="Close">
              <svg width="8" height="7" viewBox="0 0 8 7">
                <path d="M0.500 0l7 7M7.500 0l-7 7" stroke="#fff" strokeWidth="1.700" />
              </svg>
            </WindowButton>
          </WindowButtons>
        </TitleBar>
        <Frame>
          <Menu>
            {menus.map((item) => (
              <MenuItem key={item}>{item}</MenuItem>
            ))}
          </Menu>
          <BarRow>
            <Bar role="toolbar" aria-label="Standard">
              <Grip />
              <Tools
                items={["new", "open", "save", "print", "|", "cut", "copy", "paste", "delete", "|", "undo", "redo", "|", "addData", "v", "|"]}
              />
              <Combo>
                <Select aria-label="Map scale">
                  <option>1:1,500,000</option>
                </Select>
                <Chevron />
              </Combo>
              <Tools items={["|", "!editSketch", "|", "toc", "catalog", "search", "toolbox", "python", "|", "model"]} />
              <Overflow />
            </Bar>
            <Bar role="toolbar" aria-label="Editor">
              <Grip />
              <TextButton>
                Editor <Caret />
              </TextButton>
              <Tools
                items={["|", "editTool", "editText", "|", "line", "arc", "trace", "-", "burst", "|", "reshape", "cutPoly", "split", "splitLine", "rotate", "|", "attributes", "sketchProps", "|", "createFeat"]}
              />
              <Overflow />
            </Bar>
          </BarRow>
          <BarRow>
            <Bar role="toolbar" aria-label="Tools">
              <Grip />
              <Tools
                items={["zoomIn", "zoomOut", "pan", "globe", "|", "fixedIn", "fixedOut", "|", "back", "forward", "|", "!selectFeat", "v", "clearSel", "|", "arrow", "|", "identify", "hyperlink", "htmlPopup", "|", "measure", "|", "find", "route", "goToXY", "|", "clock", "|", "viewer"]}
              />
              <Overflow />
            </Bar>
            <Bar role="toolbar" aria-label="Topology">
              <Grip />
              <Tools items={["cube", "|", "topoEdit", "-", "|", "topoShare", "topoReshape"]} />
              <Overflow more />
            </Bar>
            <Bar $grow role="toolbar" aria-label="Georeferencing">
              <Grip />
              <TextButton>
                Georeferencing <Caret />
              </TextButton>
              <Separator />
              <Combo $grow>
                <Select disabled aria-label="Georeferencing layer" />
                <Chevron color="#b0b0b0" />
              </Combo>
              <Tools items={["ctrlAdd", "ctrlAuto", "ctrlSelect", "ctrlZoom", "ctrlDelete", "linkTable"]} />
              <Overflow more far />
            </Bar>
          </BarRow>
          <Work>
            <ContentsPanel />
            <MapView />
            <Tabs>
              <Tab>
                <Icon name="table" />
                Attributes
              </Tab>
              <Tab>
                <Icon name="template" />
                Create Features
              </Tab>
            </Tabs>
          </Work>
          <StatusBar>
            <Coordinates>215776.869  96902.787 Meters</Coordinates>
            <svg width="10" height="10" viewBox="0 0 10 10" aria-hidden="true">
              <path d="M6 0h2v2H6zM3 3h2v2H3zM6 3h2v2H6zM0 6h2v2H0zM3 6h2v2H3zM6 6h2v2H6z" fill="#bbb" />
            </svg>
          </StatusBar>
        </Frame>
        <Desktop>
          {slivers.map(([size, color]) => (
            <Sliver key={size} $size={size} $color={color} />
          ))}
        </Desktop>
        <Callout />
        <Arrow width="250" height="34" viewBox="0 0 250 34" aria-hidden="true">
          <path d="M0 26L232 12" stroke="#f5272b" strokeWidth="2" />
          <path d="M229 3l18 9-17 8z" fill="#f5272b" />
        </Arrow>
      </Page>
    </>
  );
}

export default App;
